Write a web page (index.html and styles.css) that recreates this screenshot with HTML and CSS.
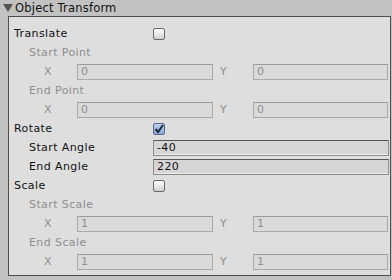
FILE: index.html
```html
<!DOCTYPE html>
<html lang="en">
<head>
    <meta charset="UTF-8">
    <title>Object Transform</title>
    <link rel="stylesheet" href="styles.css">
</head>
<body>
    <div class="header">
        <span class="fold"></span>
        <span class="title">Object Transform</span>
    </div>
    <div class="panel">
        <div class="row">
            <span class="label">Translate</span>
            <span class="check"></span>
        </div>
        <div class="row sub off"><span class="label">Start Point</span></div>
        <div class="row vec off">
            <span class="axis">X</span><span class="field">0</span>
            <span class="axis">Y</span><span class="field">0</span>
        </div>
        <div class="row sub off"><span class="label">End Point</span></div>
        <div class="row vec off">
            <span class="axis">X</span><span class="field">0</span>
            <span class="axis">Y</span><span class="field">0</span>
        </div>

        <div class="row">
            <span class="label">Rotate</span>
            <span class="check on">
                <svg width="10" height="10" viewBox="0 0 10 10"><path d="M1.5 5 L4 8 L9 1" fill="none" stroke="#1c2a44" stroke-width="2"/></svg>
            </span>
        </div>
        <div class="row sub">
            <span class="label">Start Angle</span>
            <span class="field live">-40</span>
        </div>
        <div class="row sub">
            <span class="label">End Angle</span>
            <span class="field live">220</span>
        </div>

        <div class="row">
            <span class="label">Scale</span>
            <span class="check"></span>
        </div>
        <div class="row sub off"><span class="label">Start Scale</span></div>
        <div class="row vec off">
            <span class="axis">X</span><span class="field">1</span>
            <span class="axis">Y</span><span class="field">1</span>
        </div>
        <div class="row sub off"><span class="label">End Scale</span></div>
        <div class="row vec off">
            <span class="axis">X</span><span class="field">1</span>
            <span class="axis">Y</span><span class="field">1</span>
        </div>
    </div>
</body>
</html>
```

FILE: styles.css
```css
body {
    margin: 0;
    background-color: #c2c2c2;
    font-family: "DejaVu Sans", Verdana, sans-serif;
    font-size: 11px;
    letter-spacing: 0.4px;
    color: #111111;
    height: 280px;
    overflow: hidden;
}
.header {
    height: 16px;
    display: flex;
    align-items: center;
    padding-left: 3px;
}
.fold {
    width: 0;
    height: 0;
    border-left: 5px solid transparent;
    border-right: 5px solid transparent;
    border-top: 8px solid #555555;
    margin-right: 2px;
}
.title {
    font-size: 11.5px;
    letter-spacing: 0.2px;
    color: #111111;
}
.panel {
    margin: 0 1px 0 8px;
    height: 260px;
    border: 1px solid #4e4e4e;
    background-color: #dedede;
    padding: 7px 1px 0 5px;
    box-sizing: border-box;
}
.row {
    height: 19px;
    display: flex;
    align-items: center;
}
.label {
    width: 139px;
    flex-shrink: 0;
}
.sub {
    padding-left: 15px;
}
.sub .label {
    width: 124px;
}
.off {
    color: #8e8e8e;
}
.vec {
    padding-left: 30px;
}
.axis {
    width: 33px;
    flex-shrink: 0;
}
.field {
    height: 16px;
    box-sizing: border-box;
    border: 1px solid #a9a9a9;
    border-top-color: #9a9a9a;
    background-color: #dadada;
    padding-left: 3px;
    line-height: 14px;
    width: 136px;
}
.vec .field + .axis {
    margin-left: 7px;
}
.vec .field:last-child {
    width: 135px;
}
.field.live {
    flex: 1;
    color: #111111;
    background-color: #d6d6d6;
    border: 1px solid #8c8c8c;
    border-top-color: #555555;
    box-shadow: inset 0 -1px 0 #ececec;
}
.check {
    width: 12px;
    height: 12px;
    box-sizing: border-box;
    border: 1px solid #6a6a6a;
    border-radius: 2px;
    background: linear-gradient(#ffffff, #cfcfcf);
    display: flex;
    align-items: center;
    justify-content: center;
}
.check.on {
    background: linear-gradient(#bcd0ee, #8ea9d6);
    border-color: #5b6a86;
}
```
